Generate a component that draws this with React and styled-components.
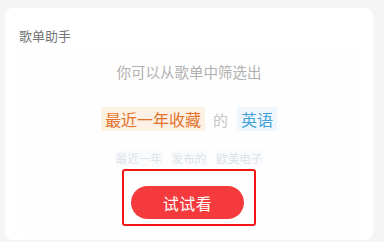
import React from "react";
import styled, { createGlobalStyle } from "styled-components";

const GlobalStyle = createGlobalStyle`
  html, body {
    margin: 0;
    padding: 0;
    background: #f5f5f5;
    font-family: "Noto Sans CJK SC", "Noto Sans", sans-serif;
  }
`;

const Page = styled.div`
  width: 384px;
  height: 242px;
  padding: 8px 11px 2px 5px;
  box-sizing: border-box;
  overflow: hidden;
`;

const Card = styled.div`
  height: 232px;
  background: #ffffff;
  border-radius: 8px;
  padding-top: 19px;
  box-sizing: border-box;
  display: flex;
  flex-direction: column;
`;

const Title = styled.div`
  padding-left: 14px;
  font-size: 13px;
  line-height: 17px;
  color: #757575;
`;

const Panel = styled.div`
  flex: 1;
  margin: 2px 16px 2px 16px;
  background: #fefefe;
  border-radius: 4px;
  display: flex;
  flex-direction: column;
  align-items: center;
`;

const Hint = styled.div`
  margin-top: 16px;
  font-size: 14.5px;
  line-height: 20px;
  color: #b0b0b0;
`;

const TagRow = styled.div`
  margin-top: 25px;
  display: flex;
  align-items: center;
  height: 24px;
`;

const Tag = styled.span`
  padding: 0 4px;
  height: 24px;
  line-height: 24px;
  font-size: 16px;
  color: ${(p) => (p.tone === "blue" ? "#43a2d8" : "#e3732b")};
  background: ${(p) => (p.tone === "blue" ? "#f0f7fc" : "#fdf0e5")};
`;

const Joiner = styled.span`
  margin: 0 9px 0 8px;
  font-size: 15px;
  color: #c6c6c6;
`;

const FadedRow = styled.div`
  margin-top: 19px;
  display: flex;
  gap: 8px;
  height: 16px;
  align-items: center;
`;

const FadedTag = styled.span`
  font-size: 11.5px;
  line-height: 14px;
  padding: 1px 1px;
  color: #dce2e9;
  background: #fafbfd;
`;

const Highlight = styled.div`
  margin-top: 3px;
  width: 134px;
  height: 57px;
  box-sizing: border-box;
  border: 2px solid #f21616;
  border-radius: 3px;
  padding: 15px 0 0 7px;
`;

const TryButton = styled.button`
  width: 113px;
  height: 33px;
  border: none;
  border-radius: 17px;
  background: #f43a3c;
  color: #ffffff;
  font-family: inherit;
  font-size: 16px;
  letter-spacing: 0.5px;
  padding: 0;
  cursor: pointer;
`;

export default function App() {
  return (
    <Page>
      <GlobalStyle />
      <Card>
        <Title>歌单助手</Title>
        <Panel>
          <Hint>你可以从歌单中筛选出</Hint>
          <TagRow>
            <Tag>最近一年收藏</Tag>
            <Joiner>的</Joiner>
            <Tag tone="blue">英语</Tag>
          </TagRow>
          <FadedRow>
            <FadedTag>最近一年</FadedTag>
            <FadedTag>发布的</FadedTag>
            <FadedTag>欧美电子</FadedTag>
          </FadedRow>
          <Highlight>
            <TryButton>试试看</TryButton>
          </Highlight>
        </Panel>
      </Card>
    </Page>
  );
}
